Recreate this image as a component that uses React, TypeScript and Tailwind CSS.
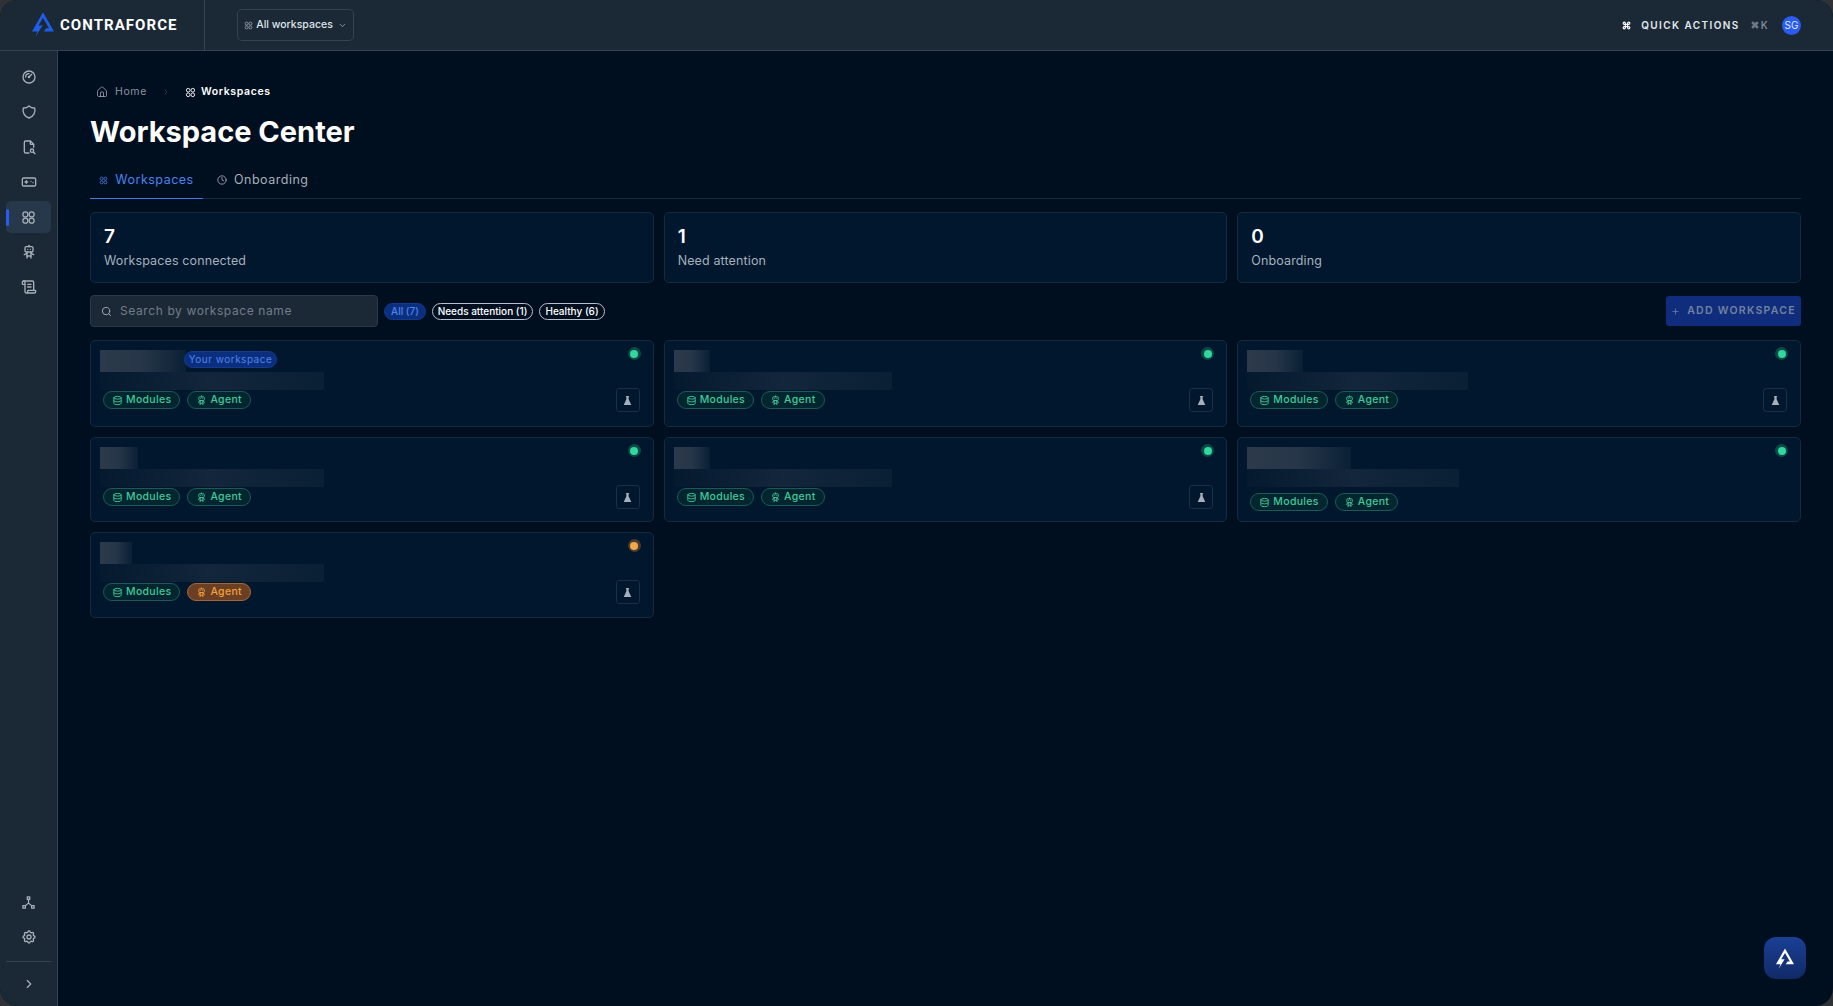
import * as React from "react";
import { ChevronDown, ChevronRight, Clock, Command, House, Plus, Search, ScrollText } from "lucide-react";
import { TbDatabase, TbDeviceGamepad, TbFileSearch, TbGauge, TbHierarchy2, TbRobot, TbSettings, TbShield } from "react-icons/tb";

function Logo({ className }: { className?: string }) {
  return (
    <svg viewBox="0 0 24 27" className={className} fill="currentColor">
      <path d="M12 0 L24 21 H13 L15.5 17.5 H18.5 L12 6 L7 14.5 H11.5 L3.5 27 L6 21 H0 Z" />
    </svg>
  );
}

// four rounded circles, used for everything "workspace"
function WorkspacesIcon({ className }: { className?: string }) {
  return (
    <svg viewBox="0 0 24 24" className={className} fill="none" stroke="currentColor" strokeWidth="2">
      <circle cx="7" cy="7" r="4" />
      <circle cx="17" cy="7" r="4" />
      <circle cx="7" cy="17" r="4" />
      <circle cx="17" cy="17" r="4" />
    </svg>
  );
}

function FlaskIcon({ className }: { className?: string }) {
  return (
    <svg viewBox="0 0 24 24" className={className} fill="currentColor">
      <path d="M8.5 2 H15.5 V4 H14.5 V9 L20 21 Q20.4 22 19.2 22 H4.8 Q3.6 22 4 21 L9.5 9 V4 H8.5 Z" />
    </svg>
  );
}

const navTop = [TbGauge, TbShield, TbFileSearch, TbDeviceGamepad, WorkspacesIcon, TbRobot, ScrollText];

const workspaces = [
  { block: "w-[224px]", name: "w-[86px]", own: true, warn: false, lab: true, mid: "" },
  { block: "w-[218px]", name: "w-[36px]", own: false, warn: false, lab: true, mid: "" },
  { block: "w-[221px]", name: "w-[56px]", own: false, warn: false, lab: true, mid: "" },
  { block: "w-[224px]", name: "w-[38px]", own: false, warn: false, lab: true, mid: "" },
  { block: "w-[218px]", name: "w-[36px]", own: false, warn: false, lab: true, mid: "" },
  { block: "w-[212px]", name: "w-[104px]", own: false, warn: false, lab: false, mid: "" },
  { block: "w-[224px]", name: "w-[32px]", own: false, warn: true, lab: true, mid: "" },
];

const rowHeights = ["h-[87px]", "h-[87px]", "h-[87px]", "h-[85px]", "h-[85px]", "h-[85px]", "h-[86px]"];

function Chip({ warn, icon, label }: { warn?: boolean; icon: React.ReactNode; label: string }) {
  return (
    <span
      className={
        "flex h-[18px] items-center gap-[3px] rounded-full border px-[8px] text-[10.5px] font-medium tracking-[0.03em] " +
        (warn
          ? "border-[#a0683a] bg-[#6b3f24] text-[#f2a13c]"
          : "border-[#1c5a55] bg-[#02262f] text-[#42c79a]")
      }
    >
      {icon}
      {label}
    </span>
  );
}

function WorkspaceCard({ w, height }: { w: (typeof workspaces)[number]; height: string }) {
  return (
    <div className={"flex flex-col rounded-[5px] border border-[#15293f] bg-[#00172e] pl-[9px] pr-[13px] pt-[9px] " + height}>
      <div className="flex justify-between">
        <div className={"flex h-[40px] flex-col " + w.block}>
          <div className="flex h-[22px] items-start">
            <div className={"h-[22px] bg-gradient-to-r from-[#2c3a4b] via-[#263648] to-[#0a2035] " + w.name} />
            {w.own && (
              <span className="ml-[-2px] mt-[1px] flex h-[17px] w-[93px] items-center justify-center rounded-full border border-[#123a90] bg-[#0c2f7d] text-[10px] tracking-[0.05em] text-[#4d84ee]">
                Your workspace
              </span>
            )}
          </div>
          <div className="h-[18px] bg-gradient-to-r from-[#05192f] via-[#13263b] to-[#0a2035]" />
        </div>
        <span
          className={
            "mr-[-1px] mt-[-3px] flex h-[13px] w-[13px] items-center justify-center rounded-full " +
            (w.warn ? "bg-[#4a3b2a]" : "bg-[#0b4a45]")
          }
        >
          <span className={"h-[8px] w-[8px] rounded-full " + (w.warn ? "bg-[#f0a848]" : "bg-[#33d69f]")} />
        </span>
      </div>
      <div className={"flex items-center justify-between pl-[3px] " + (w.lab ? "mt-[-2px]" : "mt-[6px]")}>
        <div className="flex gap-[7px]">
          <Chip icon={<TbDatabase className="size-[11px]" />} label="Modules" />
          <Chip warn={w.warn} icon={<TbRobot className="size-[11px]" />} label="Agent" />
        </div>
        {w.lab && (
          <button className="flex h-[24px] w-[24px] items-center justify-center rounded-[3px] border border-[#1c2f44] text-[#a7b0ba]">
            <FlaskIcon className="size-[11px]" />
          </button>
        )}
      </div>
    </div>
  );
}

export default function App() {
  return (
    <div className="h-[1006px] w-full overflow-hidden bg-[#2f3234] font-['Inter',sans-serif]">
      <div className="relative flex h-full flex-col overflow-hidden rounded-[18px] bg-[#000f20]">
        {/* top bar */}
        <header className="flex h-[51px] shrink-0 items-center border-b border-[#35424f] bg-[#1b2836]">
          <div className="flex h-full w-[205px] items-center border-r border-[#35424f] pl-[32px]">
            <Logo className="mb-[1px] h-[25px] w-[22px] text-[#1f5fe8]" />
            <span className="ml-[6px] font-['Roboto',sans-serif] text-[15px] font-bold tracking-[0.07em] text-white">CONTRAFORCE</span>
          </div>
          <button className="ml-[32px] flex h-[32px] w-[117px] items-center justify-center gap-[3px] rounded-[5px] border border-[#35424f] text-[10.5px] font-medium text-[#dfe4e9]">
            <WorkspacesIcon className="size-[9px] text-[#a7b0ba]" />
            All workspaces
            <ChevronDown className="ml-[2px] size-[9px] text-[#a7b0ba]" />
          </button>
          <div className="ml-auto flex items-center pr-[32px]">
            <Command className="size-[9px] text-white" strokeWidth={3} />
            <span className="ml-[10px] text-[10px] font-semibold tracking-[0.14em] text-[#e4e8ec]">QUICK ACTIONS</span>
            <span className="ml-[11px] flex items-center gap-[2px] text-[10px] font-medium tracking-[0.05em] text-[#8b949e]">
              <Command className="size-[8px]" strokeWidth={3} />K
            </span>
            <span className="ml-[14px] flex size-[19px] items-center justify-center rounded-full bg-[#2a5cf0] text-[10px] text-[#dfe6fb]">SG</span>
          </div>
        </header>

        <div className="flex min-h-0 flex-1">
          {/* side rail */}
          <aside className="flex w-[58px] shrink-0 flex-col border-r border-[#35424f] bg-[#1b2836] px-[6px] pt-[10px] text-[#a7b0ba]">
            <nav className="flex flex-col gap-[3px]">
              {navTop.map((Icon, i) => (
                <div
                  key={i}
                  className={"relative flex h-[32px] items-center justify-center rounded-[5px] " + (i === 4 ? "bg-[#27384a]" : "")}
                >
                  {i === 4 && <span className="absolute left-0 top-[8px] h-[17px] w-[3px] rounded-full bg-[#2a5cf0]" />}
                  <Icon className={i === 4 ? "size-[15px]" : "size-[16px]"} />
                </div>
              ))}
            </nav>
            <div className="mt-auto flex flex-col gap-[3px]">
              <div className="flex h-[32px] items-center justify-center">
                <TbHierarchy2 className="size-[15px]" />
              </div>
              <div className="flex h-[32px] items-center justify-center">
                <TbSettings className="size-[16px]" />
              </div>
              <div className="mt-[5px] flex h-[45px] items-center justify-center border-t border-[#35424f]">
                <ChevronRight className="size-[14px]" />
              </div>
            </div>
          </aside>

          <main className="min-w-0 flex-1 px-[32px] pt-[31px]">
            <div className="flex h-[20px] items-center pl-[6px] text-[10.5px] tracking-[0.06em]">
              <House className="size-[12px] text-[#a7b0ba]" strokeWidth={1.5} />
              <span className="ml-[7px] text-[#8b949e]">Home</span>
              <ChevronRight className="ml-[15px] size-[8px] text-[#3c4755]" />
              <WorkspacesIcon className="ml-[15px] size-[11px] text-white" />
              <span className="ml-[5px] font-semibold text-white">Workspaces</span>
            </div>
            <h1 className="mt-[12px] text-[29px] font-bold leading-[36px] text-white">Workspace Center</h1>

            <div className="mt-[12px] flex h-[37px] border-b border-[#1d2a38] text-[12.5px] tracking-[0.04em]">
              <div className="mb-[-1px] flex w-[113px] items-center justify-center gap-[7px] border-b border-[#3f7be8] text-[#4b82ee]">
                <WorkspacesIcon className="size-[9px]" />
                Workspaces
              </div>
              <div className="flex items-center gap-[7px] pl-[14px] text-[#a7b0ba]">
                <Clock className="size-[10px]" />
                Onboarding
              </div>
            </div>

            <div className="mt-[13px] grid grid-cols-3 gap-[10px]">
              {[
                ["7", "Workspaces connected"],
                ["1", "Need attention"],
                ["0", "Onboarding"],
              ].map(([n, label]) => (
                <div key={label} className="flex h-[71px] flex-col rounded-[5px] border border-[#15293f] bg-[#00172e] pl-[13px] pt-[12px]">
                  <span className="text-[19px] font-semibold leading-[24px] text-white">{n}</span>
                  <span className="mt-[3px] text-[12.5px] leading-[18px] tracking-[0.01em] text-[#a7b0ba]">{label}</span>
                </div>
              ))}
            </div>

            <div className="mt-[12px] flex h-[32px] items-center">
              <div className="flex h-full w-[288px] items-center rounded-[4px] border border-[#2c3947] bg-[#1b2836] pl-[10px] text-[12px] tracking-[0.05em] text-[#727d89]">
                <Search className="size-[11px] text-[#a7b0ba]" />
                <span className="ml-[8px]">Search by workspace name</span>
              </div>
              <div className="ml-[6px] flex gap-[6px] text-[10px] font-medium">
                <span className="flex h-[17px] w-[42px] items-center justify-center rounded-full border border-[#123a90] bg-[#0c2f7d] text-[#4d84ee]">All (7)</span>
                <span className="flex h-[17px] w-[101px] items-center justify-center rounded-full border border-[#b7c0ca] text-white">Needs attention (1)</span>
                <span className="flex h-[17px] w-[66px] items-center justify-center rounded-full border border-[#b7c0ca] text-white">Healthy (6)</span>
              </div>
              <button className="ml-auto flex h-[30px] w-[135px] items-center justify-center gap-[7px] rounded-[3px] bg-[#0f2d7c] text-[10.5px] font-semibold tracking-[0.12em] text-[#74829f]">
                <Plus className="size-[9px]" />
                ADD WORKSPACE
              </button>
            </div>

            <div className="mt-[13px] grid grid-cols-3 gap-x-[10px] gap-y-[10px]">
              {workspaces.map((w, i) => (
                <WorkspaceCard key={i} w={w} height={rowHeights[i]} />
              ))}
            </div>
          </main>
        </div>

        <button className="absolute bottom-[27px] right-[27px] flex size-[42px] items-center justify-center rounded-[12px] bg-gradient-to-b from-[#1a3f95] to-[#102a66] text-white">
          <Logo className="h-[21px] w-[18px]" />
        </button>
      </div>
    </div>
  );
}
